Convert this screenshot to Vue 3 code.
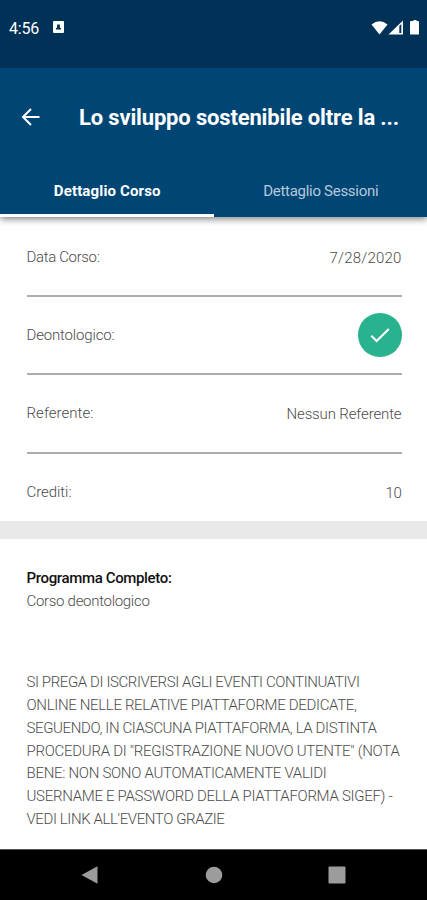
<script setup>
const rows = [
  { label: 'Data Corso:', lw: 73, value: '7/28/2020', vw: 72 },
  { label: 'Deontologico:', lw: 88, check: true },
  { label: 'Referente:', lw: 67, value: 'Nessun Referente', vw: 115 },
  { label: 'Crediti:', lw: 45, value: '10', vw: 16 },
]

const program = [
  { text: 'SI PREGA DI ISCRIVERSI AGLI EVENTI CONTINUATIVI', width: 333 },
  { text: 'ONLINE NELLE RELATIVE PIATTAFORME DEDICATE,', width: 330 },
  { text: 'SEGUENDO, IN CIASCUNA PIATTAFORMA, LA DISTINTA', width: 350 },
  { text: 'PROCEDURA DI "REGISTRAZIONE NUOVO UTENTE" (NOTA', width: 373 },
  { text: 'BENE: NON SONO AUTOMATICAMENTE VALIDI', width: 300 },
  { text: 'USERNAME E PASSWORD DELLA PIATTAFORMA SIGEF) -', width: 366 },
  { text: "VEDI LINK ALL'EVENTO GRAZIE", width: 198 },
]

// Tracks a single line of text so that it occupies the given width.
const vFit = {
  mounted(el, { value }) {
    const natural = el.getBoundingClientRect().width
    const spacing = (value - natural) / el.textContent.length
    el.style.letterSpacing = `${spacing}px`
  },
}
</script>

<template>
  <div class="screen">
    <header class="header">
      <div class="status">
        <span v-fit="30" class="time">4:56</span>
        <svg class="notice" width="11" height="12" viewBox="0 0 11 12">
          <rect width="11" height="12" rx="1" fill="#fff" />
          <path d="M3 8.5V7.2l1.1-.8V3.6h2.8v2.8l1.1.8v1.3z" fill="#003157" />
        </svg>
        <svg class="signals" width="50" height="16" viewBox="0 0 50 16">
          <path d="M.5 4.5Q8.5-1.800 16.500 4.500L8.500 14.500z" fill="#fff" />
          <path d="M32 .5V14.500H17.500z" fill="#fff" />
          <path d="M28.300 6v7h2V4z" fill="#003157" />
          <path d="M41 1h1.500V0h3v1H47q1 0 1 1v12q0 .6-.6.6h-7.800q-.6 0-.6-.6V2q0-1 1-1z" fill="#fff" />
        </svg>
      </div>
      <div class="appbar">
        <svg class="back" width="20" height="20" viewBox="0 0 20 20">
          <path d="M18.500 10H2M10 2L2 10l8 8" fill="none" stroke="#fff" stroke-width="2" />
        </svg>
        <h1 v-fit="320" class="title">Lo sviluppo sostenibile oltre la ...</h1>
      </div>
      <nav class="tabs">
        <div class="tab active"><span v-fit="107">Dettaglio Corso</span></div>
        <div class="tab"><span v-fit="115">Dettaglio Sessioni</span></div>
      </nav>
    </header>

    <main class="content">
      <section class="details">
        <div v-for="row in rows" :key="row.label" class="row">
          <span v-fit="row.lw" class="label">{{ row.label }}</span>
          <span v-if="row.check" class="badge">
            <svg width="44" height="44" viewBox="0 0 44 44">
              <path d="M13.300 22.800l5.300 5.300L30.800 16" fill="none" stroke="#fff" stroke-width="2.100" />
            </svg>
          </span>
          <span v-else v-fit="row.vw" class="value">{{ row.value }}</span>
        </div>
      </section>
      <section class="program">
        <h2><span v-fit="145">Programma Completo:</span></h2>
        <p class="subject"><span v-fit="123">Corso deontologico</span></p>
        <div class="notes">
          <p v-for="line in program" :key="line.text">
            <span v-fit="line.width">{{ line.text }}</span>
          </p>
        </div>
      </section>
    </main>

    <footer class="navbar">
      <svg width="18" height="20" viewBox="0 0 18 20"><path d="M.5 10L16.500 1.200v17.600z" fill="#9c9c9c" /></svg>
      <svg width="18" height="18" viewBox="0 0 18 18"><circle cx="9" cy="9" r="8.300" fill="#9c9c9c" /></svg>
      <svg width="18" height="18" viewBox="0 0 18 18"><rect x=".5" y=".5" width="17" height="17" rx="1" fill="#9c9c9c" /></svg>
    </footer>
  </div>
</template>

<style>
body {
  margin: 0;
}
</style>

<style scoped>
.screen {
  width: 427px;
  height: 900px;
  display: flex;
  flex-direction: column;
  overflow: hidden;
  background: #fff;
  font-family: Roboto, "Liberation Sans", sans-serif;
}
.screen span,
.title {
  white-space: nowrap;
}
.header {
  position: relative;
  height: 217px;
  flex: none;
  background: #004675;
  box-shadow: 0 2px 7px rgba(0, 0, 0, 0.5);
}
.status {
  box-sizing: border-box;
  height: 68px;
  padding: 20px 6px 0 9px;
  display: flex;
  align-items: flex-start;
  background: #003157;
  color: #fff;
}
.time {
  font-size: 16px;
  line-height: 18px;
  font-weight: 400;
}
.notice {
  margin: 1px 0 0 14px;
}
.signals {
  margin-left: auto;
}
.appbar {
  height: 98px;
  display: flex;
  align-items: center;
}
.back {
  margin-left: 21px;
}
.title {
  margin: 2px 0 0 38px;
  color: #fff;
  font-size: 22px;
  line-height: 28px;
  font-weight: 700;
}
.tabs {
  display: flex;
  height: 51px;
}
.tab {
  box-sizing: border-box;
  flex: 1;
  padding: 15px 0 0 1px;
  text-align: center;
  color: #b5c9db;
  font-size: 15px;
  line-height: 20px;
}
.tab.active {
  border-bottom: 3px solid #fff;
  color: #fff;
  font-weight: 700;
}
.content {
  flex: 1;
}
.details {
  padding: 0 25.5px 0 26.5px;
  height: 304px;
}
.row {
  box-sizing: border-box;
  height: 78px;
  display: flex;
  align-items: center;
  justify-content: space-between;
  border-bottom: 2px solid #adadad;
  color: #4c4c4c;
  font-size: 15px;
  line-height: 20px;
  font-weight: 300;
}
.row:first-child {
  height: 80px;
  padding-top: 1px;
}
.row:nth-child(3) {
  height: 79px;
  padding-bottom: 2px;
}
.row:last-child {
  border-bottom: 0;
  padding-bottom: 3px;
}
.value {
  padding-top: 2px;
}
.badge {
  width: 43.5px;
  height: 43.5px;
  border-radius: 50%;
  background: #29b28e;
}
.program {
  padding: 28px 26px 0 26.5px;
  border-top: 18px solid #e9e9e9;
  color: #4c4c4c;
  font-size: 15px;
  line-height: 23px;
  font-weight: 300;
}
.program h2,
.program p {
  margin: 0;
}
.program h2 {
  color: #111;
  font-size: 15px;
  font-weight: 500;
}
.notes {
  margin-top: 58px;
}
.notes p {
  height: 22.85px;
}
.navbar {
  height: 51px;
  box-sizing: border-box;
  border-top: 1px solid #555;
  display: flex;
  align-items: center;
  justify-content: space-between;
  padding: 0 81px;
  background: #000;
}
</style>
